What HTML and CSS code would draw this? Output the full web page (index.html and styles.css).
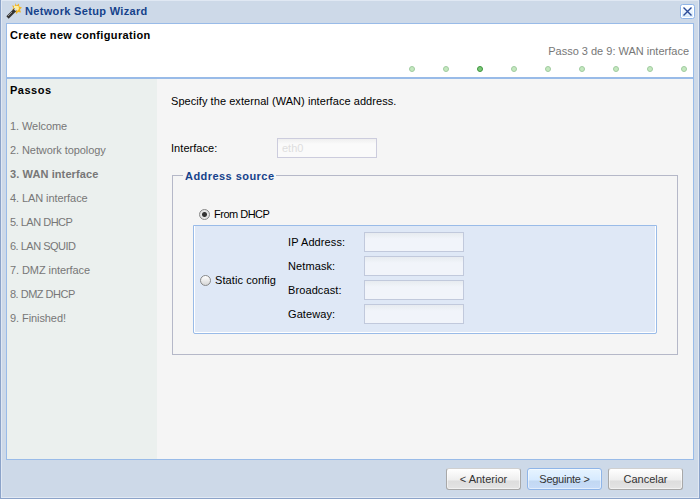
FILE: index.html
```html
<!DOCTYPE html>
<html lang="pt">
<head>
<meta charset="utf-8">
<title>Network Setup Wizard</title>
<link rel="stylesheet" href="styles.css">
</head>
<body>
<div class="window">
  <header class="titlebar">
    <svg class="wand" width="16" height="16" viewBox="0 0 16 16">
      <path d="M9.500 0l1 2.500L13 .5l.2 3 2.800 1-2 2 1 3-3-.5-1.500 2-1.500-3-3-1 1.500-2-1.500-2.500 3 .5z" fill="#f2b624"/>
      <path d="M8 3h4.500l.5 3-2 2-3-2z" fill="#fff0a0"/>
      <path d="M1.500 14.500l8-8" stroke="#333" stroke-width="3.200"/>
      <path d="M2 13l4-4" stroke="#999" stroke-width="1"/>
      <path d="M8 6.500l1.500-1.500 1.500 1.500-1.500 1.500z" fill="#ddd"/>
    </svg>
    <h1 class="title">Network Setup Wizard</h1>
    <svg class="close" width="15" height="15" viewBox="0 0 15 15">
      <defs><linearGradient id="closeFill" x2="0" y2="1"><stop offset="0" stop-color="#fff"/><stop offset="1" stop-color="#d5e9fb"/></linearGradient></defs>
      <rect x=".5" y=".5" width="14" height="14" rx="2" fill="#fff" stroke="#8fb5e8"/>
      <rect x="2" y="2" width="11" height="11" fill="url(#closeFill)"/>
      <path d="M3.500 3.500l8 8M11.500 3.500l-8 8" stroke="#2a4a98" stroke-width="1.400"/>
    </svg>
  </header>
  <main class="frame">
    <div class="head">
      <h2 class="heading">Create new configuration</h2>
      <div class="progress">Passo 3 de 9: WAN interface</div>
      <div class="dots"><i></i><i></i><i class="on"></i><i></i><i></i><i></i><i></i><i></i><i></i></div>
    </div>
    <div class="body">
      <nav class="steps">
        <h3>Passos</h3>
        <ul>
          <li>1. Welcome</li>
          <li>2. Network topology</li>
          <li class="current">3. WAN interface</li>
          <li>4. LAN interface</li>
          <li class="tight">5. LAN DHCP</li>
          <li class="tight">6. LAN SQUID</li>
          <li>7. DMZ interface</li>
          <li class="tight">8. DMZ DHCP</li>
          <li>9. Finished!</li>
        </ul>
      </nav>
      <section class="content">
        <p class="intro">Specify the external (WAN) interface address.</p>
        <div class="row iface"><label class="iface-label">Interface:</label><div class="field">eth0</div></div>
        <div class="group">
          <div class="legend"><span>Address source</span></div>
          <div class="option"><span class="radio checked"></span><span class="dhcp">From DHCP</span></div>
          <div class="panel">
            <div class="option static"><span class="radio"></span><span class="static-label">Static config</span></div>
            <div class="rows">
              <div class="row"><label>IP Address:</label><div class="field"></div></div>
              <div class="row"><label>Netmask:</label><div class="field"></div></div>
              <div class="row"><label>Broadcast:</label><div class="field"></div></div>
              <div class="row"><label>Gateway:</label><div class="field"></div></div>
            </div>
          </div>
        </div>
      </section>
    </div>
  </main>
  <footer class="buttons">
    <button>&lt; Anterior</button><button class="primary">Seguinte &gt;</button><button>Cancelar</button>
  </footer>
</div>
</body>
</html>
```
FILE: styles.css
```css
* { box-sizing: border-box; margin: 0; padding: 0; }
body { width: 700px; height: 499px; overflow: hidden; font: 11px/16px "Liberation Sans", Arial, sans-serif; color: #000; background: #fff; }
.window { height: 499px; display: flex; flex-direction: column; background: #cdd9e8; border: 1px solid #8ba3c9; border-top: 0; box-shadow: inset 0 0 0 1px #e0e8f3; padding: 0 5px; }
.titlebar { height: 23px; display: flex; padding-top: 4px; }
.wand { margin-top: -1px; }
.title { font-size: 11px; line-height: 15px; color: #15428b; margin-left: 3px; letter-spacing: .33px; flex: 1; }
.close { margin-right: -1px; }
.frame { height: 437px; border: 1px solid #99bbe8; display: flex; flex-direction: column; }
.head { height: 55px; background: #fff; border-bottom: 2px solid #99bbe8; padding: 3px 4px 0 3px; }
.heading { font-size: 11px; line-height: 16px; letter-spacing: .36px; }
.progress { text-align: right; color: #777; }
.dots { display: flex; justify-content: flex-end; gap: 28px; padding: 7px 2px 0 0; }
.dots i { width: 6px; height: 6px; border-radius: 50%; background: #c4e8bf; border: 1px solid #a0cba0; }
.dots .on { background: #7bc878; border-color: #3e963e; }
.body { flex: 1; display: flex; background: #f5f5f5; }
.steps { width: 150px; background: #ebf0ee; padding: 3px; color: #777; }
.steps h3 { font-size: 11px; line-height: 16px; color: #000; letter-spacing: .5px; }
.steps ul { list-style: none; padding-top: 16px; }
.steps li { height: 24px; line-height: 24px; letter-spacing: -.08px; }
.steps .current { font-weight: bold; letter-spacing: .1px; }
.steps .tight { letter-spacing: -.5px; }
.content { flex: 1; padding: 14px 15px 14px 14px; }
.intro { letter-spacing: .06px; }
.row { display: flex; align-items: center; height: 20px; }
.field { width: 100px; height: 20px; border: 1px solid #ccccdd; background: linear-gradient(#efefef, #fafafa 5px); color: #dedede; padding-left: 4px; line-height: 19px; }
.iface { margin-top: 29px; }
.iface-label { width: 106px; letter-spacing: .05px; }
.group { border: 1px solid #b5b8c8; width: 506px; height: 180px; margin: 17px 0 0 1px; padding-left: 20px; }
.legend { height: 16px; margin: -8px 0 0 -10px; color: #15428b; font-weight: bold; letter-spacing: .45px; }
.legend span { display: inline-block; background: #f5f5f5; padding: 0 2px; }
.option { display: flex; align-items: center; }
.group > .option { height: 17px; margin: 22px 0 2px 6px; }
.dhcp { letter-spacing: -.5px; margin-top: -1px; }
.radio { width: 11px; height: 11px; border: 1px solid #888; border-radius: 50%; background: linear-gradient(#fff, #d6d6d6); margin-right: 4px; flex: none; }
.radio.checked { background: radial-gradient(circle, #333 0 2px, #e5e5e5 3px); }
.static-label { letter-spacing: .08px; margin-top: -2px; }
.panel { width: 464px; height: 109px; border: 1px solid #99bbe8; box-shadow: inset -1px -1px #fff, inset 1px 0 #fff; background: #dfe8f6; border-radius: 0 0 2px 2px; display: flex; }
.static { width: 94px; padding: 2px 0 0 6px; }
.rows { padding-top: 6px; display: flex; flex-direction: column; gap: 4px; }
.rows label { width: 76px; letter-spacing: .1px; }
.rows .field { border-color: #c1c9dc; background: linear-gradient(#e7ebf0, #f1f4fa 6px); }
.buttons { flex: 1; display: flex; justify-content: flex-end; gap: 6px; padding: 8px 11px 0 0; }
.buttons button { width: 75px; height: 22px; border: 1px solid #a8a8a8; border-top-color: #d0d0d0; border-radius: 3px; font: 11px/16px "Liberation Sans", Arial, sans-serif; color: #333; background: linear-gradient(#fff, #eee 55%, #ddd 60%, #e4e4e4); box-shadow: inset 0 0 0 1px #ffffff80; }
.buttons .primary { border-color: #8fb5e8; background: linear-gradient(#e7f4ff, #d6eaff 55%, #c2d8f2 60%, #c7dcf8); letter-spacing: -.25px; }
```
